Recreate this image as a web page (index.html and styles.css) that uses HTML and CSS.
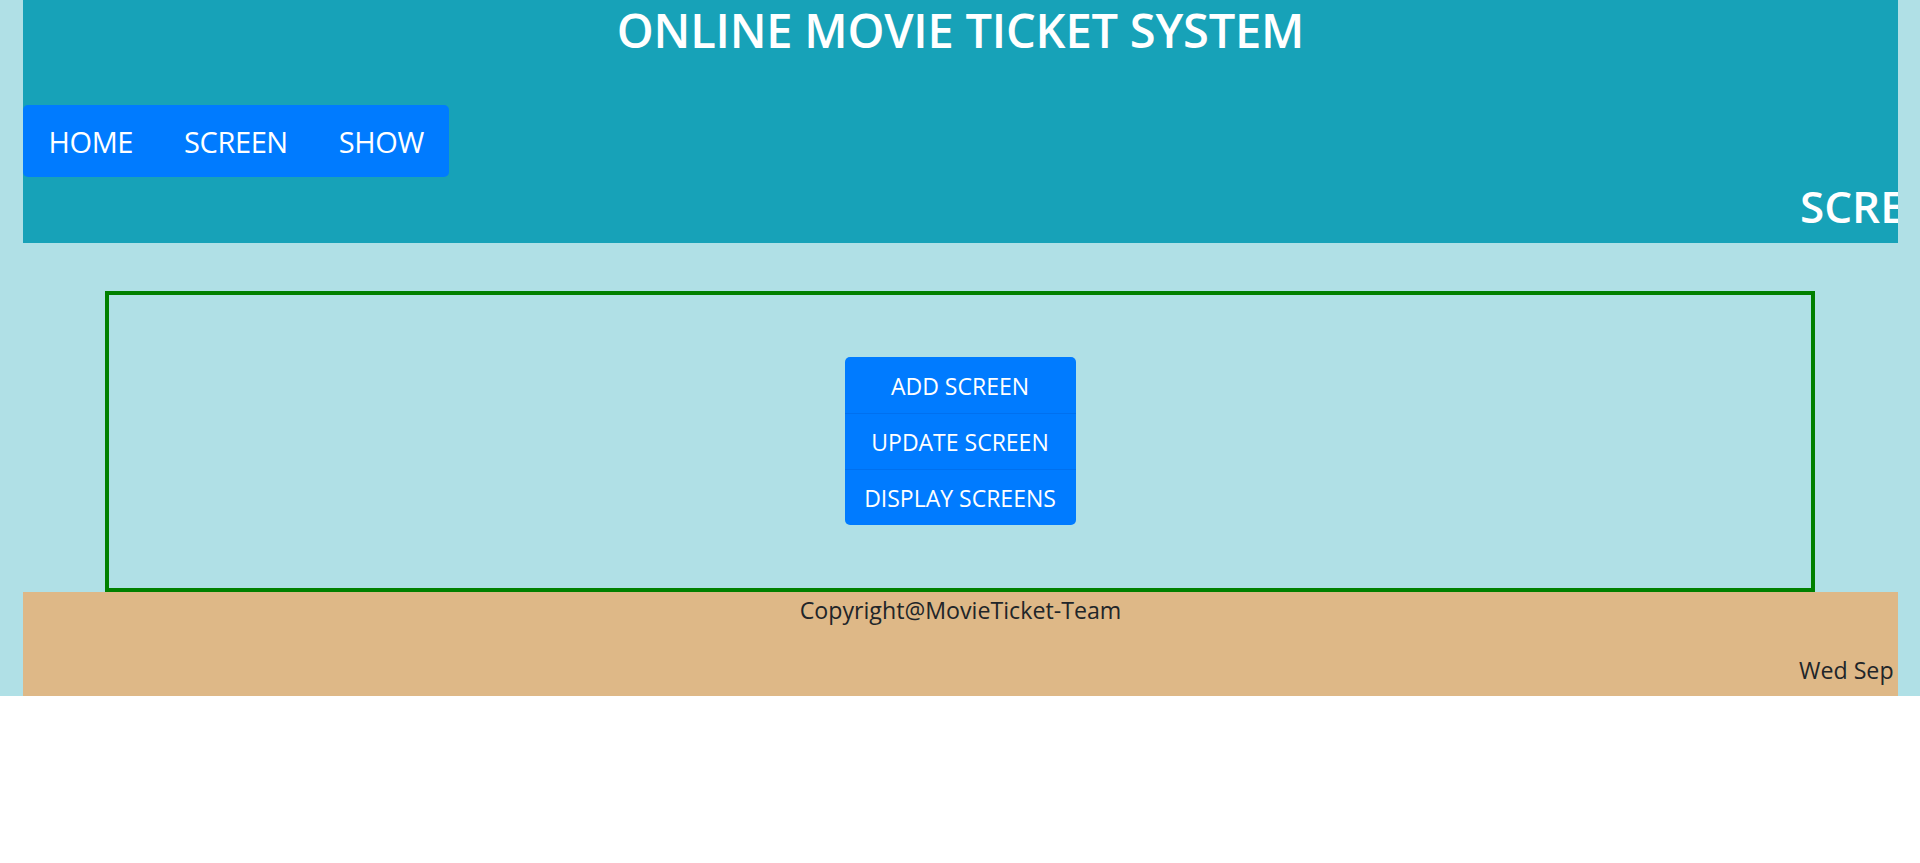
FILE: index.html
```html
<!DOCTYPE html>
<html lang="en">
<head>
<meta charset="utf-8">
<title>Online Movie Ticket System</title>
<link rel="stylesheet" href="styles.css">
</head>
<body>
<div class="page">
  <header class="header">
    <h1 class="title">ONLINE MOVIE TICKET SYSTEM</h1>
    <nav class="nav">
      <a class="nav-link" href="#">HOME</a>
      <a class="nav-link" href="#">SCREEN</a>
      <a class="nav-link" href="#">SHOW</a>
    </nav>
    <div class="ticker">
      <h2 class="ticker-text">SCREEN MANAGEMENT</h2>
    </div>
  </header>

  <main class="panel">
    <div class="btn-group">
      <button class="btn">ADD SCREEN</button>
      <button class="btn">UPDATE SCREEN</button>
      <button class="btn">DISPLAY SCREENS</button>
    </div>
  </main>

  <footer class="footer">
    <p class="copyright">Copyright@MovieTicket-Team</p>
    <div class="date-ticker"><span class="date-text">Wed Sep</span> <span class="date-rest">30 2020</span></div>
  </footer>
</div>
</body>
</html>
```

FILE: styles.css
```css
* { box-sizing: border-box; }

html, body {
  margin: 0;
  padding: 0;
  background: #ffffff;
}

body {
  font-family: "Open Sans", "Noto Sans", "Liberation Sans", sans-serif;
  color: #212529;
}

.page {
  background: #b0e0e6;
  padding: 0 22px 0 23px;
}

/* ---------- header ---------- */
.header {
  background: #17a2b8;
  padding: 0 0 13px;
  overflow: hidden;
}

.title {
  margin: 0;
  text-align: center;
  color: #ffffff;
  font-size: 47px;
  font-weight: 600;
  line-height: 60px;
  letter-spacing: -0.2px;
}

.nav {
  display: inline-flex;
  margin-top: 45px;
  background: #007bff;
  border-radius: 5px;
  padding: 14px 0 13px;
}

.nav-link {
  color: #ffffff;
  text-decoration: none;
  font-size: 29px;
  line-height: 45px;
  letter-spacing: -0.4px;
  padding: 0 25.5px;
}

.ticker {
  margin-top: 5px;
  overflow: hidden;
  white-space: nowrap;
}

.ticker-text {
  margin: 0;
  padding-left: 1777px;
  color: #ffffff;
  font-size: 44px;
  font-weight: 600;
  line-height: 48px;
}

/* ---------- panel ---------- */
.panel {
  margin: 48px 83px 0 82px;
  border: 4px solid #008000;
  padding: 62px 0 63px;
  display: flex;
  justify-content: center;
}

.btn-group {
  display: flex;
  flex-direction: column;
  width: 231px;
  border-radius: 5px;
  overflow: hidden;
}

.btn {
  display: block;
  width: 100%;
  border: 0;
  margin: 0;
  background: #007bff;
  color: #ffffff;
  font-family: inherit;
  font-size: 23px;
  line-height: 32px;
  padding: 13px 0 11px;
  text-align: center;
  white-space: nowrap;
}

.btn + .btn {
  box-shadow: inset 0 1px 0 rgba(0, 100, 220, 0.45);
}

/* ---------- footer ---------- */
.footer {
  background: #deb887;
  padding: 0 0 8px;
  overflow: hidden;
}

.copyright {
  margin: 0;
  text-align: center;
  font-size: 23.2px;
  line-height: 36px;
}

.date-ticker {
  margin: 24px 0 0 0;
  overflow: hidden;
  white-space: nowrap;
  font-size: 23.2px;
  line-height: 36px;
}

.date-text {
  padding-left: 1776px;
}
```
